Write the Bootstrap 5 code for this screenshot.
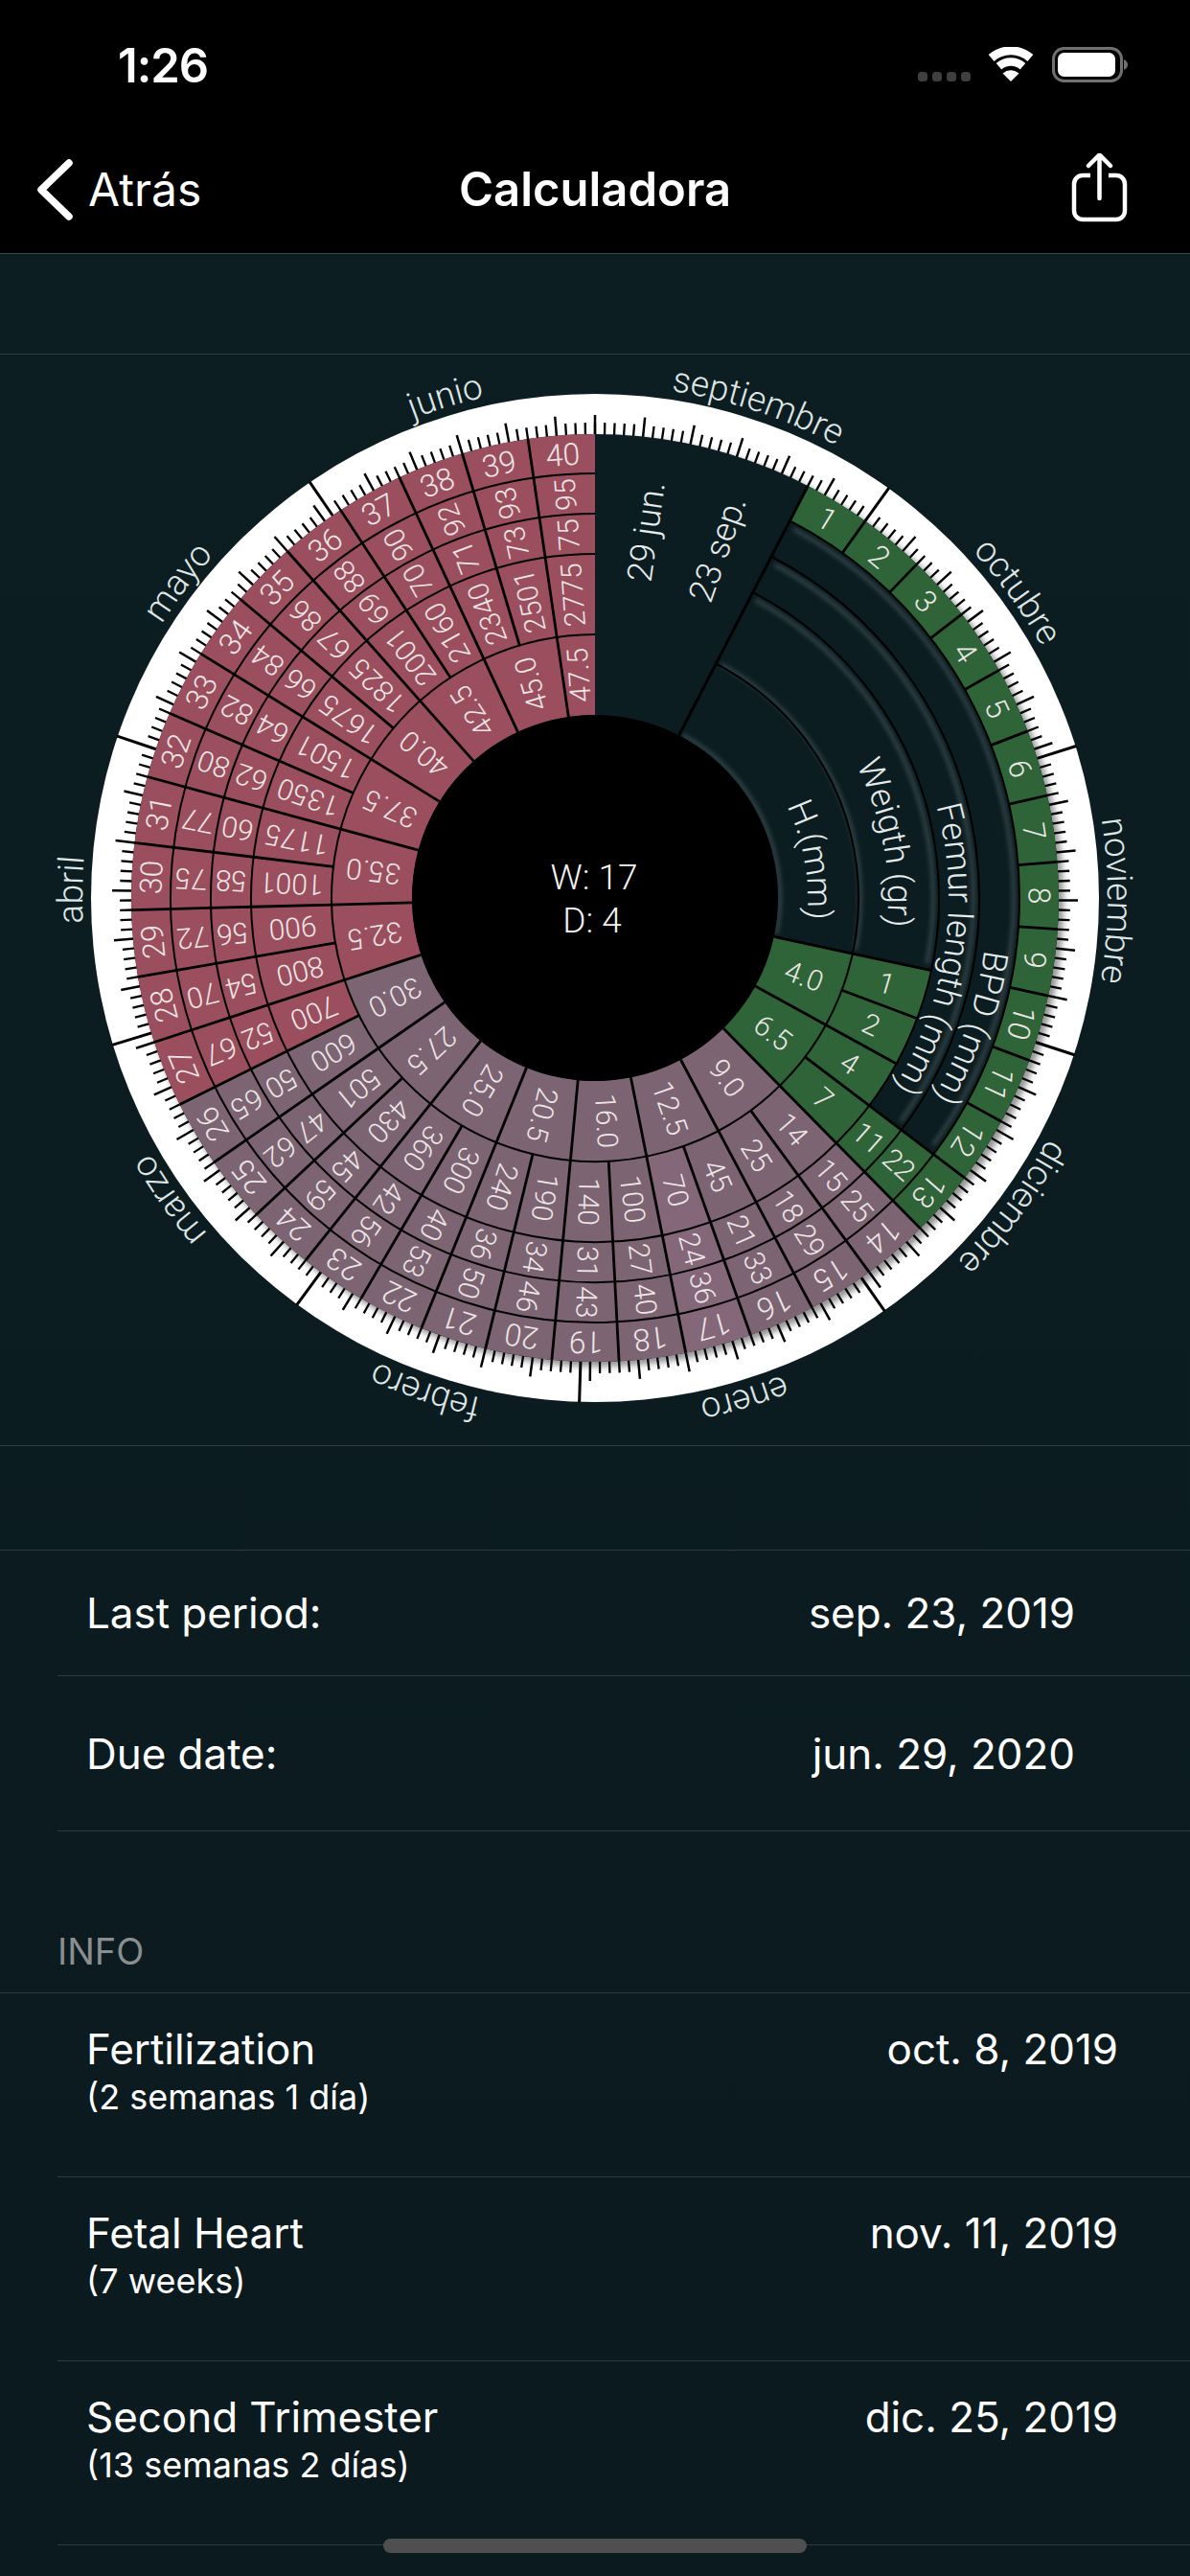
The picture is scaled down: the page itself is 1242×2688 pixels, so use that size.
<!DOCTYPE html>
<html lang="es">
<head>
<meta charset="utf-8">
<title>Calculadora</title>
<link href="https://cdn.jsdelivr.net/npm/bootstrap@5.3.0/dist/css/bootstrap.min.css" rel="stylesheet">
<style>
html,body{margin:0;background:#0b1c20;}
body{width:1242px;height:2688px;overflow:hidden;position:relative;font-family:Inter,"Liberation Sans",sans-serif;color:#fff;background:linear-gradient(#0d1e22,#0a1a1e);}
.ios-head{height:265px;background:#000;border-bottom:1px solid #35464a;}
.status-row{height:132px;padding:44px 65px 0 123px;}
.status-time{font-size:49px;line-height:50px;font-weight:600;letter-spacing:-1px;}
.status-icons{margin-top:5px;display:block;}
.ios-nav.navbar{height:132px;padding:0 38px;}
.nav-side{flex:1 1 0;color:#fff;}
.nav-back{font-size:48px;line-height:60px;gap:16px;text-decoration:none;color:#fff;}
.nav-title{font-size:49px;font-weight:600;line-height:60px;}
.nav-share{margin-right:25px;}
.gap-top{height:104px;}
.chart-band{height:1140px;border-top:1px solid #2e3b3d;border-bottom:1px solid #2e3b3d;}
.chart-band svg{display:block;}
.gap-mid{height:108px;}
.calc-list{--bs-list-group-bg:transparent;--bs-list-group-color:#fff;--bs-list-group-border-color:#2e3b3d;border-top:1px solid #2e3b3d;}
.list-group-flush>.calc-row.list-group-item{margin-left:60px;padding:38px 120px 0 30px;font-size:44px;letter-spacing:-.05px;line-height:54px;border-bottom:1px solid #2e3b3d;}
.list-group-flush>.calc-row.row-one{height:131px;}
.list-group-flush>.calc-row.row-two{height:162px;padding-top:54px;}
.list-group-flush>.calc-row.row-info{height:192px;padding:31px 75px 0 30px;}
.list-group-flush>.calc-row.list-group-item:last-child{border-bottom:1px solid #2e3b3d;}
.sec-head{height:168px;padding:103px 0 0 60px;font-size:38px;line-height:44px;color:#8b8e90;}
.row-sub{font-size:36px;line-height:46px;letter-spacing:0;}
.home-bar{position:absolute;left:400px;top:2649px;width:442px;height:15px;border-radius:8px;background:#4f4f4f;}
.wheel-num{font-family:Roboto,"Liberation Sans",sans-serif;font-weight:300;font-size:30px;fill:#ece6e6;text-anchor:middle;dominant-baseline:central;}
.wheel-week{font-size:32px;}
.wheel-month{font-family:Roboto,"Liberation Sans",sans-serif;font-weight:300;font-size:37px;fill:#dfe6e6;text-anchor:middle;}
.wheel-label{font-family:Roboto,"Liberation Sans",sans-serif;font-weight:300;font-size:36px;fill:#e6ebeb;text-anchor:middle;}
.wheel-tag{dominant-baseline:central;}
.wheel-center{font-family:Roboto,"Liberation Sans",sans-serif;font-weight:300;font-size:37px;fill:#f2f2f2;text-anchor:middle;}
</style>
</head>
<body>
<header class="ios-head">
  <div class="status-row d-flex justify-content-between align-items-start">
    <span class="status-time">1:26</span>
    <svg class="status-icons" width="219" height="37" viewBox="0 0 219 37">
      <rect x="0" y="26" width="10" height="10" rx="3.5" fill="#3f3f3f"/>
      <rect x="15" y="26" width="10" height="10" rx="3.5" fill="#3f3f3f"/>
      <rect x="30" y="26" width="10" height="10" rx="3.5" fill="#3f3f3f"/>
      <rect x="45" y="26" width="10" height="10" rx="3.5" fill="#3f3f3f"/>
      <path d="M76.6 11.5 A31 31 0 0 1 117.4 11.5" fill="none" stroke="#fff" stroke-width="9"/>
      <path d="M84.5 20.3 A19 19 0 0 1 109.5 20.3" fill="none" stroke="#fff" stroke-width="8.5"/>
      <path d="M97 36 L88.5 27.5 Q97 21 105.500 27.500 Z" fill="#fff"/>
      <rect x="141.500" y="1.500" width="71" height="34" rx="11" fill="none" stroke="#707070" stroke-width="3"/>
      <rect x="146" y="6" width="60" height="25" rx="6.500" fill="#fff"/>
      <path d="M215 13 Q219 15 219 18.500 Q219 22 215 24 Z" fill="#707070"/>
    </svg>
  </div>
  <nav class="navbar ios-nav d-flex flex-nowrap align-items-center">
    <a class="nav-side nav-back d-flex align-items-center" href="#">
      <svg width="38" height="64" viewBox="0 0 38 64"><path d="M34 4 L5 32 L34 60" fill="none" stroke="#fff" stroke-width="7.500" stroke-linecap="round" stroke-linejoin="round"/></svg>
      <span>Atrás</span>
    </a>
    <span class="nav-title">Calculadora</span>
    <div class="nav-side d-flex justify-content-end">
      <svg class="nav-share" width="62" height="76" viewBox="0 0 62 76">
        <path d="M21 23 H13 A9 9 0 0 0 4 32 V60 A9 9 0 0 0 13 69 H48 A9 9 0 0 0 57 60 V32 A9 9 0 0 0 48 23 H40" fill="none" stroke="#fff" stroke-width="4.500"/>
        <path d="M30.500 47 V2 M19 13 L30.500 1.500 L42 13" fill="none" stroke="#fff" stroke-width="4.500" stroke-linecap="round" stroke-linejoin="round"/>
      </svg>
    </div>
  </nav>
</header>
<div class="gap-top"></div>
<section class="chart-band">
  <svg id="wheel" width="1242" height="1138" viewBox="0 0 1242 1138" xmlns="http://www.w3.org/2000/svg"></svg>
</section>
<div class="gap-mid"></div>
<ul class="list-group list-group-flush rounded-0 calc-list">
  <li class="list-group-item calc-row row-one d-flex justify-content-between"><span>Last period:</span><span>sep. 23, 2019</span></li>
  <li class="list-group-item calc-row row-two d-flex justify-content-between"><span>Due date:</span><span>jun. 29, 2020</span></li>
</ul>
<div class="sec-head">INFO</div>
<ul class="list-group list-group-flush rounded-0 calc-list">
  <li class="list-group-item calc-row row-info d-flex justify-content-between"><div>Fertilization<div class="row-sub">(2 semanas 1 día)</div></div><span>oct. 8, 2019</span></li>
  <li class="list-group-item calc-row row-info d-flex justify-content-between"><div>Fetal Heart<div class="row-sub">(7 weeks)</div></div><span>nov. 11, 2019</span></li>
  <li class="list-group-item calc-row row-info d-flex justify-content-between"><div>Second Trimester<div class="row-sub">(13 semanas 2 días)</div></div><span>dic. 25, 2019</span></li>
</ul>
<div class="home-bar"></div>
<script src="https://cdn.jsdelivr.net/npm/bootstrap@5.3.0/dist/js/bootstrap.bundle.min.js"></script>
<script>
(function(){
var cx=621,cy=567,out=[];
var PINK='#9b4f5e',GREY='#7c6472',GREEN='#2e6437',BG='#0c1d21';
var WK=360/303*7,A0=360/303*23;
function a(w){return A0+(w-1)*WK;}
function P(r,t){var q=t*Math.PI/180;return (cx+r*Math.sin(q)).toFixed(2)+' '+(cy-r*Math.cos(q)).toFixed(2);}
function sector(r1,r2,t1,t2){var l=(t2-t1)>180?1:0;return 'M'+P(r1,t1)+' L'+P(r2,t1)+' A'+r2+' '+r2+' 0 '+l+' 1 '+P(r2,t2)+' L'+P(r1,t2)+' A'+r1+' '+r1+' 0 '+l+' 0 '+P(r1,t1)+'Z';}
function arc(r,t1,t2){var l=(t2-t1)>180?1:0;return 'M'+P(r,t1)+' A'+r+' '+r+' 0 '+l+' 1 '+P(r,t2);}
function line(r1,r2,t,w){return '<path d="M'+P(r1,t)+' L'+P(r2,t)+'" stroke="#000" stroke-width="'+w+'"/>';}
function col(w){return w<=13?GREEN:(w<=26?GREY:PINK);}
function num(txt,r,t,rot,cls){
  var q=t*Math.PI/180,x=cx+r*Math.sin(q),y=cy-r*Math.cos(q);
  return '<text class="'+(cls||'wheel-num')+'" x="'+x.toFixed(2)+'" y="'+y.toFixed(2)+'" transform="rotate('+rot.toFixed(2)+' '+x.toFixed(2)+' '+y.toFixed(2)+')">'+txt+'</text>';
}
var BPD={13:22,14:25,15:29,16:33,17:36,18:40,19:43,20:46,21:50,22:53,23:56,24:59,25:62,26:65,27:67,28:70,29:72,30:75,31:77,32:80,33:82,34:84,35:86,36:88,37:90,38:92,39:93,40:95};
var FEM={13:11,14:15,15:18,16:21,17:24,18:27,19:31,20:34,21:36,22:40,23:42,24:45,25:47,26:50,27:52,28:54,29:56,30:58,31:60,32:62,33:64,34:66,35:67,36:69,37:70,38:71,39:73,40:75};
var WGT={10:1,11:2,12:4,13:7,14:14,15:25,16:45,17:70,18:100,19:140,20:190,21:240,22:300,23:360,24:430,25:501,26:600,27:700,28:800,29:900,30:1001,31:1175,32:1350,33:1501,34:1675,35:1825,36:2001,37:2160,38:2340,39:2501,40:2775};
var HH=[['47.5',40,41],['45.0',38,40],['42.5',36,38],['40.0',34,36],['37.5',32,34],['35.0',30,32],['32.5',28,30],['30.0',26,28],['27.5',24,26],['25.0',22,24],['20.5',20,22],['16.0',18,20],['12.5',16,18],['9.0',14,16],['6.5',12,14],['4.0',10,12]];

out.push('<defs><filter id="sb" x="-5%" y="-5%" width="110%" height="110%"><feGaussianBlur stdDeviation="3"/></filter><filter id="gl" x="-10%" y="-10%" width="120%" height="120%"><feGaussianBlur stdDeviation="2.2"/></filter></defs>');
out.push('<circle cx="'+cx+'" cy="'+cy+'" r="526" fill="#fff"/>');
out.push('<circle cx="'+(cx+4)+'" cy="'+(cy+4)+'" r="485" fill="#000" opacity=".42" filter="url(#sb)"/>');
// ticks
var months=[['septiembre',30],['octubre',31],['noviembre',30],['diciembre',31],['enero',31],['febrero',29],['marzo',31],['abril',30],['mayo',31],['junio',30]];
var day=0,DEG=360/303;
months.forEach(function(m,i){
  for(var k=0;k<m[1];k++){
    var t=(day+k)*DEG;
    if(k===0&&i>0){out.push(line(483,526.5,t,3));}
    else if(k%5===0){out.push(line(483,504,t,2.5));}
    else{out.push(line(483,496,t,2.3));}
  }
  var mid=(day+m[1]/2)*DEG+(i===0?.5:0);
  out.push('<path id="mp'+i+'" d="'+arc(535,mid-40,mid+40)+'" fill="none"/>');
  out.push('<text class="wheel-month"><textPath href="#mp'+i+'" startOffset="50%">'+m[0]+'</textPath></text>');
  day+=m[1];
});
out.push('<circle cx="'+cx+'" cy="'+cy+'" r="484" fill="'+BG+'"/>');
// cells
var cells=[],txt=[];
for(var w=1;w<=40;w++){
  var t1=a(w),t2=a(w+1),tm=(t1+t2)/2,c=col(w);
  if(w===17)c='#84687a';
  cells.push('<path d="'+sector(443,484,t1,t2)+'" fill="'+c+'"/>');
  txt.push(num(w,463.5,tm,tm,'wheel-num wheel-week'));
  if(BPD[w]){cells.push('<path d="'+sector(401,443,t1,t2)+'" fill="'+c+'"/>');txt.push(num(BPD[w],422,tm,tm-90));}
  if(FEM[w]){cells.push('<path d="'+sector(359,401,t1,t2)+'" fill="'+c+'"/>');txt.push(num(FEM[w],380,tm,tm-90));}
  if(WGT[w]){cells.push('<path d="'+sector(275,359,t1,t2)+'" fill="'+c+'"/>');txt.push(num(WGT[w],317,tm,tm-90));}
}
HH.forEach(function(h){
  var t1=a(h[1]),t2=a(h[2]),tm=(t1+t2)/2;
  cells.push('<path d="'+sector(191,275,t1,t2)+'" fill="'+col(h[1])+'"/>');
  txt.push(num(h[0],233,tm,tm-90));
});
out.push(cells.join(''));
// glow on the empty rings
var glow='';
[[279,a(10)],[355,a(10)],[397,a(13)],[439,a(13)],[195,a(10)]].forEach(function(g){
  glow+='<path d="'+arc(g[0]-2,a(1)+1,g[1]-1)+'" fill="none" stroke="#4c5e62" stroke-width="4" opacity=".6"/>';
});
out.push('<g filter="url(#gl)">'+glow+'</g>');
// lines
var lines='';
[275,359,401,443].forEach(function(r){
  var st=a(1);
  lines+='<path d="'+arc(r,st,a(41))+'" fill="none" stroke="#000" stroke-width="2"/>';
});
for(var s=2;s<=13;s++){lines+=line(443,484,a(s),2.8);}
for(var s2=14;s2<=40;s2++){lines+=line(275,484,a(s2),2.8);}
for(var s3=10;s3<=13;s3++){lines+=line(275,359,a(s3),2.8);}
lines+=line(359,443,a(13),2.8);
lines+=line(191,484,a(1),3);
for(var s4=10;s4<=40;s4+=2){lines+=line(191,275,a(s4),2.8);}
out.push(lines);
out.push(txt.join(''));
// label text on the empty wedge
out.push(num('29 jun.',386,8,-82,'wheel-label wheel-tag'));
out.push(num('23 sep.',386,19.4,-70.6,'wheel-label wheel-tag'));
function arcLabel(id,s,r,mid){
  out.push('<path id="'+id+'" d="'+arc(r,mid-60,mid+60)+'" fill="none"/>');
  out.push('<text class="wheel-label"><textPath href="#'+id+'" startOffset="50%">'+s+'</textPath></text>');
}
arcLabel('lh','H.(mm)',222,80);
arcLabel('lw','Weigth (gr)',306,79.3);
arcLabel('lf','Femur length (mm)',369,98.6);
arcLabel('lb','BPD (mm)',410,109);
// centre
out.push('<circle cx="'+cx+'" cy="'+cy+'" r="191" fill="#000"/>');
out.push('<text class="wheel-center" x="620" y="558">W: 17</text>');
out.push('<text class="wheel-center" x="618" y="603">D: 4</text>');
document.getElementById('wheel').innerHTML=out.join('');
})();
</script>
</body>
</html>
